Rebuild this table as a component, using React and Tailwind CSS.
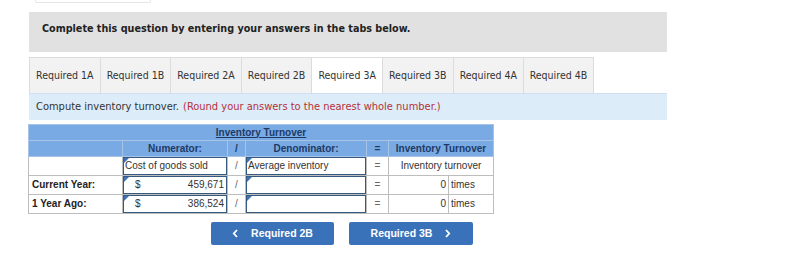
import React from "react";

const tabs = ["Required 1A", "Required 1B", "Required 2A", "Required 2B", "Required 3A", "Required 3B", "Required 4A", "Required 4B"];

function Marker() {
  return (
    <span className="absolute left-0 top-0 w-0 h-0 border-t-[5px] border-r-[5px] border-t-[#3f73b5] border-r-transparent" />
  );
}

function InputBox({ children, className = "", h = "h-[18px]" }) {
  return (
    <div className={`relative ${h} border border-[#35597f] bg-white flex items-center ${className}`}>
      <Marker />
      {children}
    </div>
  );
}

export default function App() {
  const body = "font-['Liberation_Sans',Arial,sans-serif] text-[10px] leading-[12px] text-[#333]";
  const cell = "border border-[#bdbdbd] p-0";
  const head = "border border-[#a7c4e6] p-0 text-center";
  return (
    <div className="w-[811px] h-[280px] bg-white relative font-['DejaVu_Sans',Verdana,sans-serif] [font-stretch:condensed]">
      <div className="ml-[35px] w-[116px] h-[3px] border-b border-x border-[#e6e6e6] rounded-b-[2px]" />
      <div className="ml-[29px] mt-[9px] w-[638px] h-[40px] bg-[#e1e1e1] flex items-start pt-[9px] pl-[13px]">
        <span className="text-[10.7px] font-bold text-[#222]">
          Complete this question by entering your answers in the tabs below.
        </span>
      </div>

      <div className="ml-[29px] mt-[5px] flex h-[36px] items-stretch">
        {tabs.map((t) => {
          const active = t === "Required 3A";
          return (
            <div
              key={t}
              className={`w-[70.6px] flex items-center justify-center text-[10.5px] text-[#333] border-t border-l border-[#dcdcdc] last:border-r ${
                active ? "bg-white" : "bg-[#f2f2f2]"
              }`}
            >
              {t}
            </div>
          );
        })}
      </div>

      <div className="ml-[29px] w-[638px] h-[27px] bg-[#ddecf9] border-t border-[#cfdff0] flex items-center pl-[7px] text-[11px] text-[#333]">
        <span>Compute inventory turnover.</span>
        <span className="ml-[4px] text-[#b5323a]">(Round your answers to the nearest whole number.)</span>
      </div>

      <table className={`ml-[28px] mt-[4px] border-collapse table-fixed ${body}`}>
        <colgroup>
          <col className="w-[94px]" />
          <col className="w-[105px]" />
          <col className="w-[18px]" />
          <col className="w-[121px]" />
          <col className="w-[22px]" />
          <col className="w-[60px]" />
          <col className="w-[45px]" />
        </colgroup>
        <tbody>
          <tr className="bg-[#79aae3]">
            <td colSpan={7} className={`${head} h-[16px] font-bold text-[#1d3a66] underline`}>
              Inventory Turnover
            </td>
          </tr>
          <tr className="bg-[#79aae3] font-bold text-[#1d3a66]">
            <td className={`${head} h-[16px]`} />
            <td className={head}>Numerator:</td>
            <td className={head}>/</td>
            <td className={head}>Denominator:</td>
            <td className={head}>=</td>
            <td colSpan={2} className={head}>Inventory Turnover</td>
          </tr>
          <tr>
            <td className={`${cell} h-[19px]`} />
            <td className={cell}>
              <InputBox h="h-[18px]" className="pl-[1px]">Cost of goods sold</InputBox>
            </td>
            <td className={`${cell} text-center text-[#666]`}>/</td>
            <td className={cell}>
              <InputBox h="h-[18px]" className="pl-[1px]">Average inventory</InputBox>
            </td>
            <td className={`${cell} text-center text-[#666]`}>=</td>
            <td colSpan={2} className={`${cell} text-center`}>Inventory turnover</td>
          </tr>
          {[
            ["Current Year:", "459,671"],
            ["1 Year Ago:", "386,524"],
          ].map(([label, num]) => (
            <tr key={label}>
              <td className={`${cell} h-[19px] font-bold text-[#222] pl-[3px]`}>{label}</td>
              <td className={cell}>
                <InputBox h="h-[18px]" className="justify-between pl-[11px] pr-[2px]">
                  <span>$</span>
                  <span>{num}</span>
                </InputBox>
              </td>
              <td className={`${cell} text-center text-[#666]`}>/</td>
              <td className={cell}>
                <InputBox h="h-[18px]" />
              </td>
              <td className={`${cell} text-center text-[#666]`}>=</td>
              <td className={`${cell} text-right pr-[2px]`}>0</td>
              <td className={`${cell} pl-[2px]`}>times</td>
            </tr>
          ))}
        </tbody>
      </table>

      <div className="ml-[211px] mt-[8px] flex gap-[15px] font-['Liberation_Sans',Arial,sans-serif] [font-stretch:normal] text-[10.5px] font-bold text-white">
        <div className="w-[123px] h-[23px] rounded-[2px] bg-[#3a72ba] flex items-center justify-center gap-[12px]">
          <svg width="7" height="9" viewBox="0 0 7 9" fill="none" stroke="white" strokeWidth="1.8">
            <path d="M5 1 L1.8 4.5 L5 8" />
          </svg>
          <span>Required 2B</span>
        </div>
        <div className="w-[124px] h-[23px] rounded-[2px] bg-[#3a72ba] flex items-center justify-center gap-[12px]">
          <span>Required 3B</span>
          <svg width="7" height="9" viewBox="0 0 7 9" fill="none" stroke="white" strokeWidth="1.8">
            <path d="M2 1 L5.2 4.5 L2 8" />
          </svg>
        </div>
      </div>
    </div>
  );
}
